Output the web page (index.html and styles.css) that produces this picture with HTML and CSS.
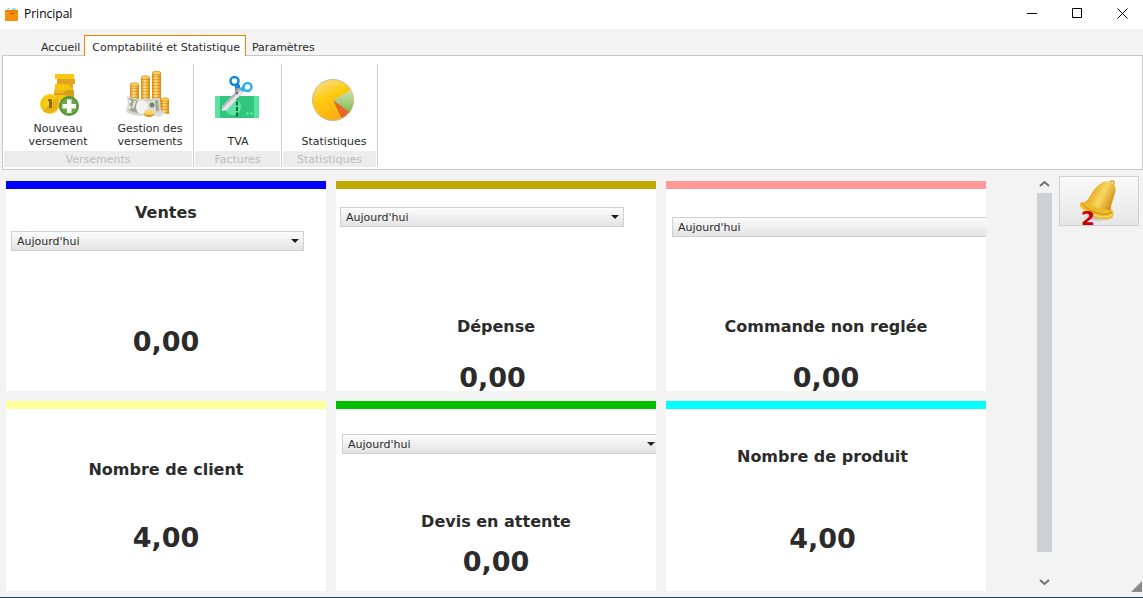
FILE: index.html
```html
<!DOCTYPE html>
<html lang="fr">
<head>
<meta charset="utf-8">
<title>Principal</title>
<link rel="stylesheet" href="styles.css">
</head>
<body>
<header class="titlebar">
  <svg class="app-icon" viewBox="0 0 13 14" aria-hidden="true">
    <path d="M1 4 3 1h7l2 3z" fill="#8fd3ef"/>
    <path d="M3 3 5 1h3L7 3z" fill="#d9f2fb"/>
    <rect x="0" y="3" width="13" height="11" rx="1" fill="#f79009"/>
    <rect x="0" y="3" width="13" height="2" fill="#e8830a"/>
    <rect x="5" y="6" width="4" height="1" fill="#a95500"/>
  </svg>
  <h1 class="title">Principal</h1>
  <div class="window-controls">
    <button type="button" aria-label="Réduire"><svg viewBox="0 0 11 11"><path d="M0 5.500h10"/></svg></button>
    <button type="button" aria-label="Agrandir"><svg viewBox="0 0 11 11"><path d="M.5.5h9v9h-9z"/></svg></button>
    <button type="button" aria-label="Fermer"><svg viewBox="0 0 11 11"><path d="m.5.5 10 10m0-10-10 10"/></svg></button>
  </div>
</header>

<nav class="tabs">
  <button type="button" class="tab">Accueil</button>
  <button type="button" class="tab tab-active">Comptabilité et Statistique</button>
  <button type="button" class="tab">Paramètres</button>
</nav>

<section class="ribbon">
  <div class="group">
    <div class="actions actions-pair">
      <button type="button" class="action">
        <svg viewBox="0 0 48 48" aria-hidden="true">
          <path d="M21 3h19v5H21z" fill="#f9c80e"/>
          <path d="M23 8h18v5H23z" fill="#e3a321"/>
          <path d="M21 13h18v6H21z" fill="#f6c50f"/><path d="m33 13 6 6v-6z" fill="#e8ae18"/>
          <path d="M20 19h20v5H20z" fill="#d99d20"/><path d="M20 19h13l-5 3h-8z" fill="#f0b81a"/>
          <path d="M20 24h20v6H20z" fill="#f6c50f"/><path d="m31 24 9 6v-6z" fill="#dca31d"/>
          <circle cx="16" cy="33" r="10" fill="#f9ce12"/>
          <path d="M23 26a10 10 0 0 1-14 14z" fill="#e4ae1c"/>
          <circle cx="16" cy="33" r="7.500" fill="none" stroke="#edb917"/>
          <path d="M14 28h4v9h-3v-7h-1z" fill="#8a6d16"/>
          <circle cx="35" cy="35" r="10" fill="#4f8f31"/>
          <circle cx="35" cy="35" r="8.500" fill="#6ba544"/>
          <path d="M33 28.500h4.500v4.500H42v4.500h-4.500V42H33v-4.500h-4.500V33H33z" fill="#fff"/>
        </svg>
        <span>Nouveau versement</span>
      </button>
      <button type="button" class="action">
        <svg viewBox="4 0 48 48" aria-hidden="true">
          <defs>
            <linearGradient id="gold"><stop offset="0" stop-color="#e08a12"/><stop offset=".4" stop-color="#ffdf78"/><stop offset="1" stop-color="#dd8812"/></linearGradient>
            <pattern id="coins" width="48" height="3" patternUnits="userSpaceOnUse"><path d="M0 2.500h48" stroke="#b96a0a" stroke-opacity=".35"/></pattern>
          </defs>
          <g fill="url(#gold)">
            <rect x="8" y="13" width="9" height="17"/><rect x="19" y="6" width="9" height="23"/><rect x="30" y="1" width="9" height="37"/><rect x="39" y="28" width="8" height="15"/>
          </g>
          <path d="M8 14h9v16H8zM19 7h9v22h-9zM30 2h9v36h-9zM39 29h8v13h-8z" fill="url(#coins)"/>
          <g fill="#ffd05c" stroke="#d88b18" stroke-width=".7">
            <ellipse cx="12.500" cy="13.500" rx="4.500" ry="1.700"/><ellipse cx="23.500" cy="6.500" rx="4.500" ry="1.700"/><ellipse cx="34.500" cy="2" rx="4.500" ry="1.700"/><ellipse cx="43" cy="28.500" rx="4" ry="1.700"/>
          </g>
          <path d="M4 41q8 5 17 3l17 2 5-4-4-3z" fill="#ddd"/>
          <path d="M5 25q8 4 16 3l17-1 1 15q-8-1-14 2-12 2-21-4 3-7 1-15z" fill="#d3d6c9"/>
          <path d="M7 27q7 3 14 3l15-1 1 11q-7-1-12 2-11 1-18-3 2-6 0-12z" fill="#9fa796"/>
          <path d="M15 29q10 2 18 0l1 12q-8-1-11 2l-7-1q2-7-1-13z" fill="#dcded4"/>
          <ellipse cx="20" cy="36" rx="6" ry="7" fill="#f3f3f4"/>
          <circle cx="30" cy="34" r="2.500" fill="#718467"/>
          <path d="M8 29v3m0 3v3m5-8-2 7" stroke="#e8eae0" stroke-width="2"/>
          <ellipse cx="27" cy="43" rx="5" ry="3" fill="#dd8d14"/><ellipse cx="27" cy="41.500" rx="5" ry="2.500" fill="#ffd25e"/>
        </svg>
        <span>Gestion des versements</span>
      </button>
    </div>
    <h2 class="group-name">Versements</h2>
  </div>
  <div class="group">
    <div class="actions">
      <button type="button" class="action">
        <svg viewBox="0 0 48 48" aria-hidden="true">
          <path d="M1 25h44v22H1z" fill="#5be3a2"/>
          <path d="M6 25h34v22H6z" fill="#31c67e"/>
          <circle cx="19" cy="36" r="8" fill="#5be3a2"/>
          <path d="M23 25v22" stroke="#11683f" stroke-width="2" stroke-dasharray="4 1.500"/>
          <circle cx="33.500" cy="42.500" r="1.500" fill="#5be3a2"/><circle cx="37.500" cy="42.500" r="1.500" fill="#5be3a2"/>
          <path d="m21 15 4-1v7l-4 3z" fill="#858b8f"/>
          <path d="m26 16 4 4L13 39l-5 1v-5z" fill="#b7b9bb"/>
          <path d="m28 18 2 2-17 19-5 1v-2z" fill="#e3e4e6"/>
          <circle cx="23" cy="22" r="1.200" fill="#60666b"/>
          <circle cx="20.500" cy="10" r="4" fill="none" stroke="#1287dc" stroke-width="2.500"/>
          <path d="m23 12 3 2v3h-5v-4z" fill="#1287dc"/>
          <circle cx="33.500" cy="16" r="4" fill="none" stroke="#2eb0ef" stroke-width="2.500"/>
          <path d="m30 14 1 5-2 2-4-3z" fill="#2eb0ef"/>
        </svg>
        <span>TVA</span>
      </button>
    </div>
    <h2 class="group-name">Factures</h2>
  </div>
  <div class="group">
    <div class="actions actions-wide">
      <button type="button" class="action">
        <svg viewBox="0 0 48 48" aria-hidden="true">
          <defs>
            <linearGradient id="pie" x1="0" y1="0" x2=".5" y2="1"><stop offset="0" stop-color="#f6e6a0"/><stop offset=".5" stop-color="#ffc90d"/><stop offset="1" stop-color="#f9ae18"/></linearGradient>
            <linearGradient id="slice" x1="0" y1="0" x2="0" y2="1"><stop offset="0" stop-color="#cfe2b4"/><stop offset="1" stop-color="#7fb84a"/></linearGradient>
          </defs>
          <circle cx="23" cy="29" r="20.500" fill="url(#pie)" stroke="#c9bd91"/>
          <path d="M23 29 41 19a20.500 20.500 0 0 1-2 23z" fill="url(#slice)"/>
          <path d="m23 29 16 12q-3 4-7.500 6z" fill="#e5652a"/>
        </svg>
        <span>Statistiques</span>
      </button>
    </div>
    <h2 class="group-name">Statistiques</h2>
  </div>
</section>

<div class="workspace">
  <main class="tiles">
    <section class="tile tile-sales">
      <h2>Ventes</h2>
      <select class="period" aria-label="Période des ventes"><option>Aujourd'hui</option></select>
      <p class="value">0,00</p>
    </section>
    <section class="tile tile-expense">
      <select class="period" aria-label="Période des dépenses"><option>Aujourd'hui</option></select>
      <h2>Dépense</h2>
      <p class="value inset">0,00</p>
    </section>
    <section class="tile tile-unpaid">
      <select class="period" aria-label="Période des commandes"><option>Aujourd'hui</option></select>
      <h2>Commande non reglée</h2>
      <p class="value">0,00</p>
    </section>
    <section class="tile tile-clients">
      <h2>Nombre de client</h2>
      <p class="value">4,00</p>
    </section>
    <section class="tile tile-quotes">
      <select class="period" aria-label="Période des devis"><option>Aujourd'hui</option></select>
      <h2>Devis en attente</h2>
      <p class="value">0,00</p>
    </section>
    <section class="tile tile-products">
      <h2 class="inset">Nombre de produit</h2>
      <p class="value inset">4,00</p>
    </section>
  </main>
  <div class="scrollbar">
    <button type="button" aria-label="Défiler vers le haut"><svg viewBox="0 0 11 7"><path d="m1 6 4.500-4L10 6"/></svg></button>
    <div class="thumb"></div>
    <button type="button" aria-label="Défiler vers le bas"><svg viewBox="0 0 11 7"><path d="m1 1 4.500 4L10 1"/></svg></button>
  </div>
  <aside class="side">
    <button type="button" class="alerts" aria-label="Notifications">
      <svg viewBox="0 0 40 44" aria-hidden="true">
        <defs>
          <linearGradient id="bell" x1="0" y1="0" x2="1" y2=".5"><stop offset="0" stop-color="#dd9a1c"/><stop offset=".4" stop-color="#e9b02c"/><stop offset=".65" stop-color="#f8d860"/><stop offset="1" stop-color="#d08e18"/></linearGradient>
          <radialGradient id="shade"><stop offset="0" stop-color="#999" stop-opacity=".8"/><stop offset="1" stop-color="#999" stop-opacity="0"/></radialGradient>
        </defs>
        <ellipse cx="19" cy="38" rx="15" ry="5" fill="url(#shade)"/>
        <circle cx="33" cy="4" r="2" fill="none" stroke="#dda02a" stroke-width="1.500"/>
        <path d="M21 5q5-5 12-1 5 3 3 10l-4 13q-1 5 2 9L2 25q6-2 9-8 5-9 10-12z" fill="url(#bell)"/>
        <path d="M2 23q-3 3 1 7 6 6 15 9t15 0q3-5 0-8-8 1-16-3T2 23z" fill="#eebb2c"/>
        <path d="M3 24q5 7 15 10t15-1" fill="none" stroke="#c98a12"/>
        <path d="M2 28q6 7 16 9t15-1" fill="none" stroke="#fbe07b"/>
      </svg>
      <span class="badge">2</span>
    </button>
    <svg class="grip" viewBox="0 0 11 11" aria-hidden="true"><path d="M11 0v11H0z" fill="#8a8a8a"/></svg>
  </aside>
</div>
</body>
</html>
```
FILE: styles.css
```css
* {
  box-sizing: border-box;
}

body {
  margin: 0;
  min-height: 100vh;
  display: flex;
  flex-direction: column;
  background: #f3f3f3;
  border-bottom: 1px solid #17405c;
  color: #2b2b2b;
  font: 11px/13px "DejaVu Sans", Verdana, sans-serif;
}

h1, h2, p {
  margin: 0;
}

button {
  padding: 0;
  border: 0;
  background: none;
  color: inherit;
  font: inherit;
}

svg {
  display: block;
  overflow: visible;
}

/* Title bar */
.titlebar {
  display: flex;
  align-items: center;
  height: 29px;
  padding: 0 15px 2px 5px;
  background: #fff;
}

.app-icon {
  width: 13px;
  height: 14px;
}

.title {
  margin-left: 6px;
  color: #000;
  font: 12px/16px "Open Sans", "Segoe UI", sans-serif;
}

.window-controls {
  display: flex;
  gap: 34px;
  margin-left: auto;
}

.window-controls svg {
  width: 11px;
  height: 11px;
  fill: none;
  stroke: #000;
}

/* Tabs */
.tabs {
  display: flex;
  align-items: flex-end;
  height: 27px;
  padding-left: 38px;
  position: relative;
}

.tab {
  height: 18px;
  padding: 0 4px 0 3px;
}

.tab-active {
  height: 21px;
  padding: 3px 5px 0 7px;
  border: 1px solid #f58200;
  border-bottom: 0;
  background: #fff;
}

.tab:last-child {
  padding-left: 6px;
}

/* Ribbon */
.ribbon {
  display: flex;
  margin: -1px 0 0 2px;
  padding: 8px 0 2px;
  border: 1px solid #c9c9c9;
  background: #fff;
}

.group {
  display: flex;
  flex-direction: column;
  border-right: 1px solid #cdcdcd;
}

.actions {
  display: flex;
  justify-content: center;
  padding: 7px 3px 3px 4px;
}

.actions-pair {
  gap: 12px;
  padding-left: 15px;
}

.actions-wide {
  padding-left: 12px;
}

.action {
  display: flex;
  flex-direction: column;
  align-items: center;
  gap: 3px;
  width: 80px;
}

.action svg {
  width: 48px;
  height: 48px;
}

.action span {
  display: flex;
  align-items: flex-end;
  min-height: 26px;
}

.group-name {
  margin: 0 1px;
  padding-top: 2px;
  background: #ececec;
  color: #bcbcbc;
  font-size: 11px;
  font-weight: 400;
  line-height: 14px;
  text-align: center;
}

/* Workspace */
.workspace {
  flex: 1;
  display: flex;
}

.tiles {
  flex: 1;
  display: grid;
  grid-template-columns: repeat(3, 1fr);
  grid-template-rows: 210px 1fr;
  gap: 10px;
  padding: 11px 51px 6px 6px;
}

.tile {
  display: flex;
  flex-direction: column;
  min-width: 0;
  overflow: hidden;
  border-top: 8px solid;
  background: #fff;
  text-align: center;
}

.tile h2 {
  color: #2b2b2b;
  font-size: 16px;
  line-height: 20px;
}

.value {
  color: #2b2b2b;
  font-size: 27px;
  font-weight: 700;
  line-height: 34px;
}

.inset {
  padding-right: 7px;
}

.period {
  flex: none;
  height: 20px;
  margin-left: 6px;
  padding: 0 20px 0 5px;
  appearance: none;
  border: 1px solid #cfd0d4;
  border-radius: 0;
  background:
    url("data:image/svg+xml,%3Csvg xmlns='http://www.w3.org/2000/svg' width='8' height='4'%3E%3Cpath d='M0 0h8L4 4z' fill='%23222'/%3E%3C/svg%3E") no-repeat right 4px center,
    linear-gradient(#fcfcfc, #e3e3e3);
  color: #2b2b2b;
  font: inherit;
}

.tile-sales { border-color: #0000ff; padding-top: 14px; }
.tile-sales .period { margin: 8px 22px 74px 5px; }

.tile-expense { border-color: #c0aa00; padding-top: 18px; }
.tile-expense .period { margin: 0 32px 90px 4px; }
.tile-expense h2 { margin-bottom: 24px; }

.tile-unpaid { border-color: #ff9999; padding-top: 28px; }
.tile-unpaid .period { margin-right: -20px; margin-bottom: 80px; }
.tile-unpaid h2 { margin-bottom: 24px; }

.tile-clients { border-color: #ffff99; padding-top: 51px; }
.tile-clients h2 { margin-bottom: 41px; }

.tile-quotes { border-color: #00c000; padding-top: 25px; }
.tile-quotes .period { margin-right: -4px; margin-bottom: 58px; }
.tile-quotes h2 { margin-bottom: 13px; }

.tile-products { border-color: #00ffff; padding-top: 38px; }
.tile-products h2 { margin-bottom: 55px; }

/* Scrollbar */
.scrollbar {
  display: flex;
  flex-direction: column;
  width: 15px;
  padding: 10px 0 11px;
}

.scrollbar svg {
  width: 11px;
  height: 7px;
  margin: 0 auto;
  fill: none;
  stroke: #707070;
  stroke-width: 2;
}

.thumb {
  flex: 1;
  margin: 6px 0 27px;
  background: #cfd0d4;
}

/* Side panel */
.side {
  display: flex;
  flex-direction: column;
  justify-content: space-between;
  padding: 6px 0 5px 7px;
}

.alerts {
  position: relative;
  display: grid;
  place-items: center;
  width: 80px;
  height: 50px;
  margin-right: 4px;
  border: 1px solid #cfd0d4;
  background: linear-gradient(#fafafa, #e6e6e6);
}

.alerts svg {
  width: 40px;
  height: 44px;
}

.badge {
  position: absolute;
  left: 21px;
  bottom: -3px;
  color: #c8000a;
  font-size: 20px;
  font-weight: 700;
  line-height: 20px;
}

.grip {
  align-self: flex-end;
  width: 11px;
  height: 11px;
  margin-right: 1px;
}
```
